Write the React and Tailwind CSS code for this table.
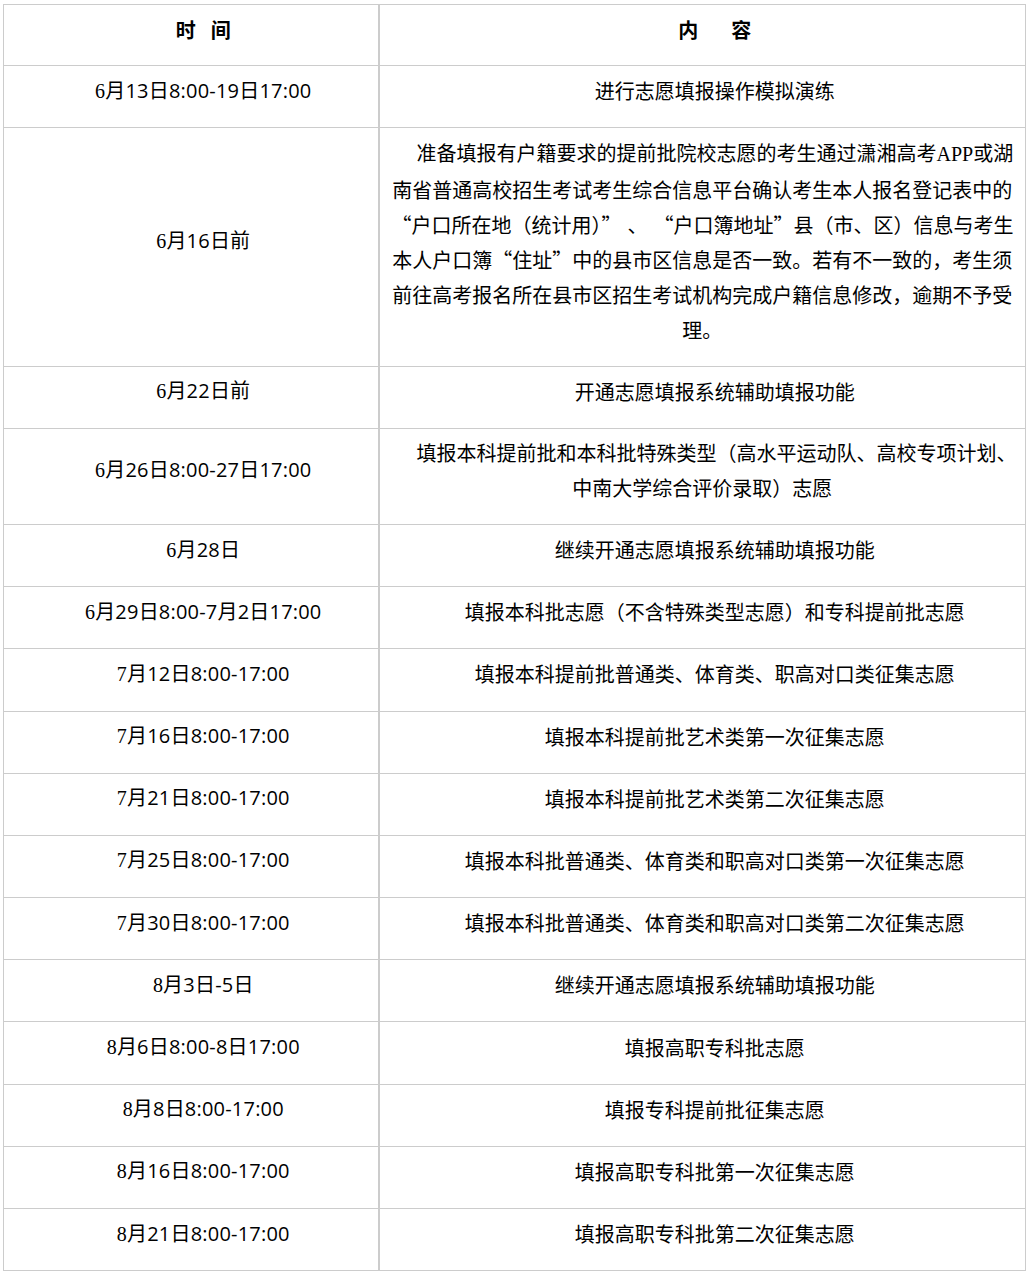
import React from "react";

const rows = [
  ["6", "月13日8:00-19日17:00", ["进行志愿填报操作模拟演练"]],
  ["6", "月16日前", "para"],
  ["6", "月22日前", ["开通志愿填报系统辅助填报功能"]],
  ["6", "月26日8:00-27日17:00", ["填报本科提前批和本科批特殊类型（高水平运动队、高校专项计划、", "中南大学综合评价录取）志愿"]],
  ["6", "月28日", ["继续开通志愿填报系统辅助填报功能"]],
  ["6", "月29日8:00-7月2日17:00", ["填报本科批志愿（不含特殊类型志愿）和专科提前批志愿"]],
  ["7", "月12日8:00-17:00", ["填报本科提前批普通类、体育类、职高对口类征集志愿"]],
  ["7", "月16日8:00-17:00", ["填报本科提前批艺术类第一次征集志愿"]],
  ["7", "月21日8:00-17:00", ["填报本科提前批艺术类第二次征集志愿"]],
  ["7", "月25日8:00-17:00", ["填报本科批普通类、体育类和职高对口类第一次征集志愿"]],
  ["7", "月30日8:00-17:00", ["填报本科批普通类、体育类和职高对口类第二次征集志愿"]],
  ["8", "月3日-5日", ["继续开通志愿填报系统辅助填报功能"]],
  ["8", "月6日8:00-8日17:00", ["填报高职专科批志愿"]],
  ["8", "月8日8:00-17:00", ["填报专科提前批征集志愿"]],
  ["8", "月16日8:00-17:00", ["填报高职专科批第一次征集志愿"]],
  ["8", "月21日8:00-17:00", ["填报高职专科批第二次征集志愿"]],
];

const serif = "font-['Liberation_Serif',serif]";

function Paragraph() {
  return (
    <>
      准备填报有户籍要求的提前批院校志愿的考生通过潇湘高考<span className={serif}>APP</span>或湖
      <br />
      南省普通高校招生考试考生综合信息平台确认考生本人报名登记表中的
      <br />
      “户口所在地（统计用）”<span className="inline-block w-[6px]"></span>、<span className="inline-block w-[6px]"></span>“户口簿地址”县（市、区）信息与考生
      <br />
      本人户口簿“住址”中的县市区信息是否一致。若有不一致的，考生须
      <br />
      前往高考报名所在县市区招生考试机构完成户籍信息修改，逾期不予受
      <br />
      理。
    </>
  );
}

export default function App() {
  const cell = "border border-[#cccccc] px-3 py-[6.6px] align-middle text-center";
  const inner = "mb-3 leading-[35px] text-[20px] indent-[25px] whitespace-nowrap";

  return (
    <div lang="zh-CN" className="bg-white pt-[4px] pl-[3px] pb-2 text-black">
      <table className="w-[1022px] table-fixed border-collapse">
        <colgroup>
          <col className="w-[375px]" />
          <col className="w-[647px]" />
        </colgroup>
        <thead>
          <tr>
            <th className={`${cell} border-r-2 font-['Noto_Sans_CJK_SC',sans-serif]`}>
              <div className={`${inner} font-bold`}>
                时<span className="inline-block w-[15px]"></span>间
              </div>
            </th>
            <th className={`${cell} font-['Noto_Sans_CJK_SC',sans-serif]`}>
              <div className={`${inner} font-bold`}>
                内<span className="inline-block w-[33px]"></span>容
              </div>
            </th>
          </tr>
        </thead>
        <tbody>
          {rows.map(([first, rest, content], i) => (
            <tr key={i}>
              <td className={`${cell} border-r-2 font-['Open_Sans','Noto_Sans_CJK_SC',sans-serif]`}>
                <div className={`${inner} tracking-[0.2px]`}>
                  <span className={serif}>{first}</span>
                  {rest}
                </div>
              </td>
              <td className={`${cell} font-['Noto_Sans_CJK_SC',sans-serif]`}>
                <div className={inner}>
                  {content === "para" ? (
                    <Paragraph />
                  ) : (
                    content.map((line, j) => (
                      <React.Fragment key={j}>
                        {j > 0 && <br />}
                        {line}
                      </React.Fragment>
                    ))
                  )}
                </div>
              </td>
            </tr>
          ))}
        </tbody>
      </table>
    </div>
  );
}
